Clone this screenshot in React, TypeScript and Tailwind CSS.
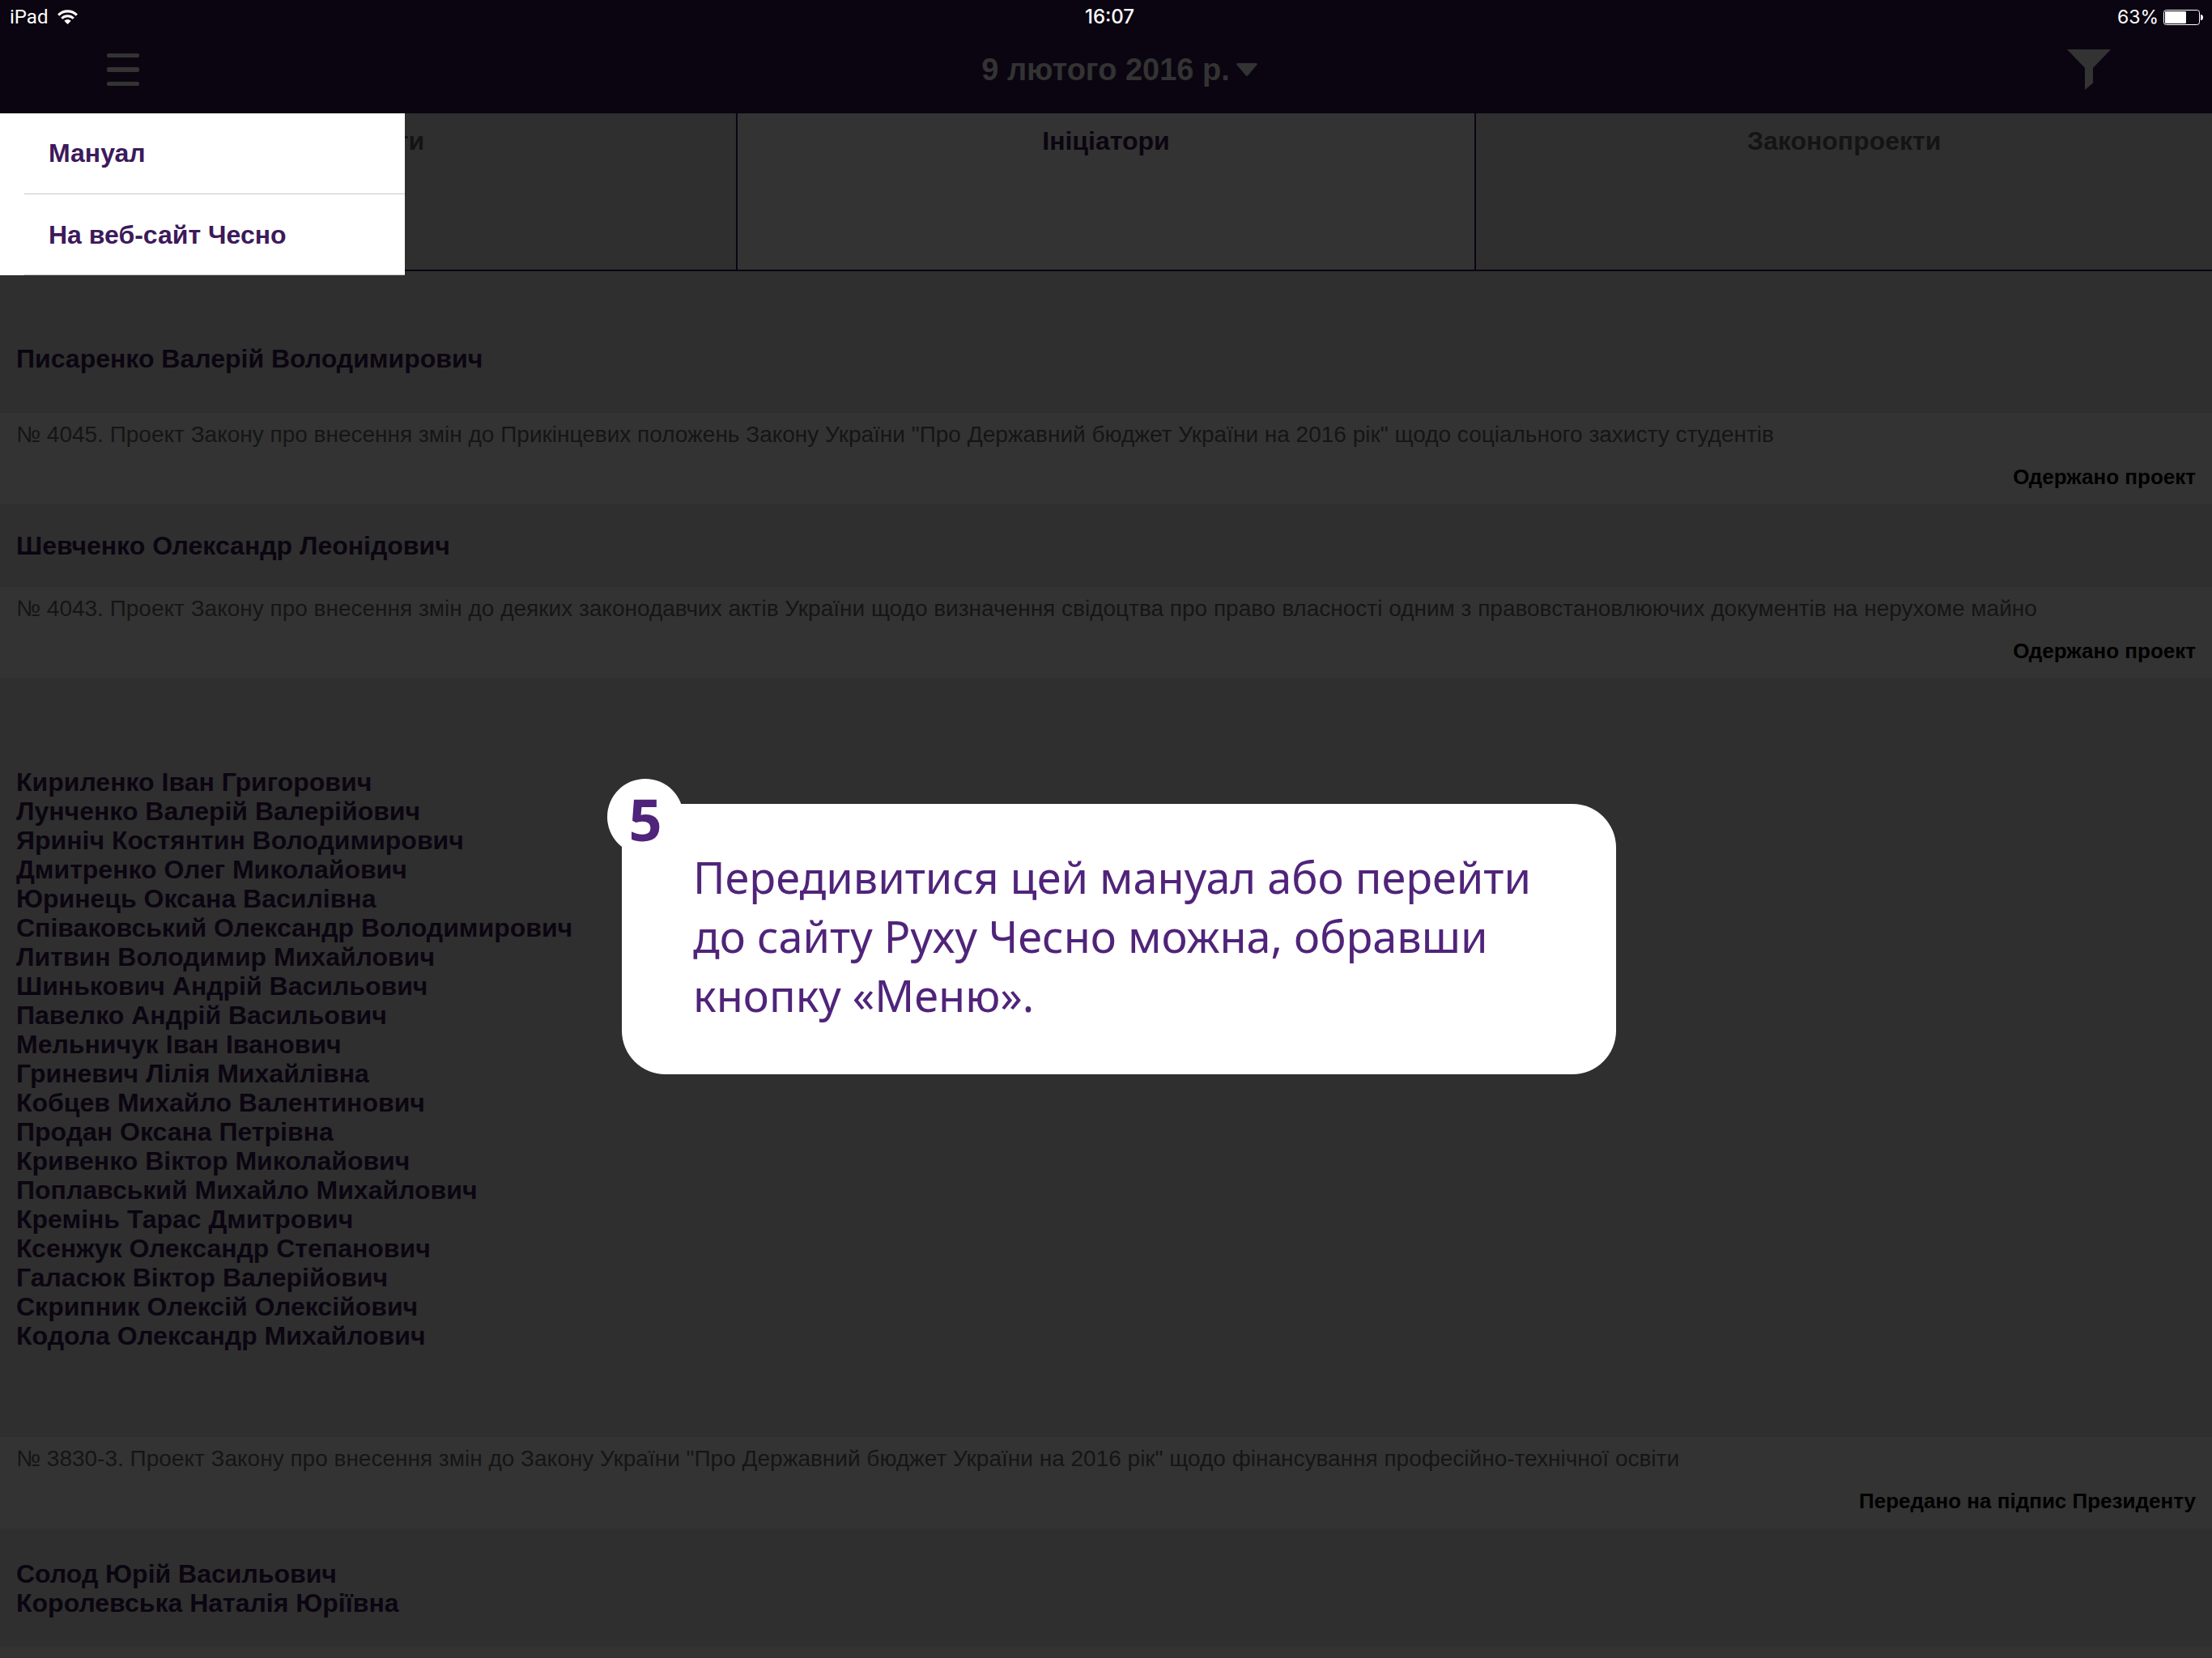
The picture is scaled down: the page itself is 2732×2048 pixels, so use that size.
type Bill = { title: string; status: string };

const signatories = [
  'Кириленко Іван Григорович',
  'Лунченко Валерій Валерійович',
  'Яриніч Костянтин Володимирович',
  'Дмитренко Олег Миколайович',
  'Юринець Оксана Василівна',
  'Співаковський Олександр Володимирович',
  'Литвин Володимир Михайлович',
  'Шинькович Андрій Васильович',
  'Павелко Андрій Васильович',
  'Мельничук Іван Іванович',
  'Гриневич Лілія Михайлівна',
  'Кобцев Михайло Валентинович',
  'Продан Оксана Петрівна',
  'Кривенко Віктор Миколайович',
  'Поплавський Михайло Михайлович',
  'Кремінь Тарас Дмитрович',
  'Ксенжук Олександр Степанович',
  'Галасюк Віктор Валерійович',
  'Скрипник Олексій Олексійович',
  'Кодола Олександр Михайлович',
];

function StatusBar() {
  return (
    <div className="grid h-10 grid-cols-3 items-center pr-[11px] pl-3 font-['Inter',sans-serif] text-[24px] leading-[42px] text-white">
      <div className="flex items-center gap-3">
        <span className="font-['Roboto',sans-serif]">iPad</span>
        <svg className="h-[18px] w-[25px]" viewBox="0 0 25 18" fill="none" aria-hidden="true">
          <path d="M1.2 6.6a16 16 0 0 1 22.6 0" stroke="#fff" strokeWidth="3.2" />
          <path d="M5.2 10.8a10.4 10.4 0 0 1 14.6 0" stroke="#fff" strokeWidth="3" />
          <path d="M12.5 18 8.3 13.8a6 6 0 0 1 8.4 0z" fill="#fff" />
        </svg>
      </div>
      <span className="pl-2 text-center font-medium">16:07</span>
      <div className="flex items-center justify-end gap-[6px]">
        <span className="text-[23px]">63%</span>
        <svg className="h-[19px] w-[49px]" viewBox="0 0 49 19" aria-hidden="true">
          <rect x=".5" y=".5" width="44" height="18" rx="3" fill="none" stroke="#fff" />
          <rect x="2" y="2" width="26" height="15" rx="1" fill="#fff" />
          <path d="M46 6a3 3.5 0 0 1 3 3.5A3 3.5 0 0 1 46 13z" fill="#fff" />
        </svg>
      </div>
    </div>
  );
}

function Toolbar() {
  return (
    <div className="flex h-[100px] items-start justify-between pr-[125px] pl-[132px] text-[#333]">
      <button type="button" aria-label="Меню" className="mt-[26px] flex w-10 flex-col gap-3">
        <span className="h-[5px] w-full rounded-[2px] bg-[#333]" />
        <span className="h-[6px] w-full rounded-[2px] bg-[#333]" />
        <span className="h-[5px] w-full rounded-[2px] bg-[#333]" />
      </button>
      <button type="button" className="mt-[23px] ml-10 flex items-center gap-2 text-[38px] leading-[46px] font-bold">
        9 лютого 2016 р.
        <svg className="h-4 w-[26px]" viewBox="0 0 26 16" fill="currentColor" aria-hidden="true">
          <path d="M1.5 0h23a1.3 1.3 0 0 1 1 2.100L14.500 15a2 2 0 0 1-3 0L.5 2.100A1.300 1.300 0 0 1 1.500 0z" />
        </svg>
      </button>
      <button type="button" aria-label="Фільтр" className="mt-[21px]">
        <svg className="h-[50px] w-[54px]" viewBox="0 0 54 50" fill="currentColor" aria-hidden="true">
          <path d="M0 0h54L32 23v18.500L22 50V23z" />
        </svg>
      </button>
    </div>
  );
}

function Names({ names, className }: { names: string[]; className: string }) {
  return (
    <h2 className={`bg-[#2f2f2f] px-5 text-[32px] leading-9 font-bold text-[#0b0511] ${className}`}>
      {names.map((name) => (
        <span key={name} className="block">
          {name}
        </span>
      ))}
    </h2>
  );
}

function BillRow({ title, status }: Bill) {
  return (
    <article className="bg-[#333] px-5 pt-[11px] pb-[18px]">
      <p className="text-[28px] leading-8 text-[#151515]">{title}</p>
      <p className="mt-5 text-right text-[26px] leading-8 font-bold text-black">{status}</p>
    </article>
  );
}

export default function App() {
  return (
    <div className="relative flex h-screen flex-col overflow-hidden bg-[#2f2f2f] font-['Liberation_Sans',Arial,sans-serif]">
      <header className="bg-[#0b0511]">
        <StatusBar />
        <Toolbar />
      </header>

      <div className="relative">
        <nav className="grid h-[195px] grid-cols-3 border-b-2 border-[#0b0511] text-[32px] leading-9 font-bold">
          <button type="button" className="flex justify-center border-r-2 border-[#0b0511] bg-[#2f2f2f] pt-4 text-[#141414]">
            Комітети
          </button>
          <button type="button" className="flex justify-center bg-[#333] pt-4 text-[#0b0511]">
            Ініціатори
          </button>
          <button type="button" className="flex justify-center border-l-2 border-[#0b0511] bg-[#2f2f2f] pt-4 text-[#141414]">
            Законопроекти
          </button>
        </nav>
        <ul className="absolute top-0 left-0 w-[500px] bg-white pl-[30px] text-[32px] font-bold text-[#3c1a5b]">
          <li className="border-b border-[#c8c7cc]">
            <button type="button" className="block h-[99px] w-full pl-[30px] text-left leading-[99px]">
              Мануал
            </button>
          </li>
          <li className="border-b border-[#c8c7cc]">
            <a href="#chesno" className="block h-[99px] w-full pl-[30px] leading-[101px]">
              На веб-сайт Чесно
            </a>
          </li>
        </ul>
      </div>

      <main>
        <Names names={['Писаренко Валерій Володимирович']} className="pt-[90px] pb-[49px]" />
        <BillRow
          title={'№ 4045. Проект Закону про внесення змін до Прикінцевих положень Закону України "Про Державний бюджет України на 2016 рік" щодо соціального захисту студентів'}
          status="Одержано проект"
        />
        <Names names={['Шевченко Олександр Леонідович']} className="py-[33px]" />
        <BillRow
          title="№ 4043. Проект Закону про внесення змін до деяких законодавчих актів України щодо визначення свідоцтва про право власності одним з правовстановлюючих документів на нерухоме майно"
          status="Одержано проект"
        />
        <Names names={signatories} className="pt-[110px] pb-[107px]" />
        <BillRow
          title={'№ 3830-3. Проект Закону про внесення змін до Закону України "Про Державний бюджет України на 2016 рік" щодо фінансування професійно-технічної освіти'}
          status="Передано на підпис Президенту"
        />
        <Names names={['Солод Юрій Васильович', 'Королевська Наталія Юріївна']} className="pt-[38px] pb-9" />
        <div className="h-28 bg-[#333]" />
      </main>

      <aside className="absolute top-[993px] left-[768px] w-[1228px] rounded-[54px] bg-white pt-[54px] pb-[61px] pl-[88px] font-['Noto_Sans',sans-serif] text-[#50247a]">
        <span className="absolute -top-[31px] -left-[18px] flex size-[94px] items-center justify-center rounded-full bg-white pt-1 text-[72px] leading-none font-bold">
          5
        </span>
        <p className="text-[54px] leading-[73px]">
          Передивитися цей мануал або перейти
          <br />
          до сайту Руху Чесно можна, обравши
          <br />
          кнопку «Меню».
        </p>
      </aside>
    </div>
  );
}
